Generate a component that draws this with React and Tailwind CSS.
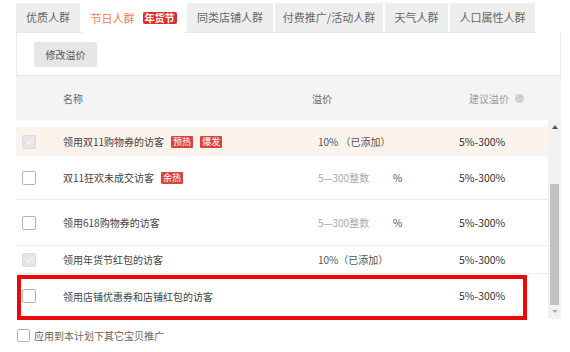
import React from "react";

const tabs = [
  { label: "优质人群", w: "w-[64px]" },
  { label: "节日人群", w: "w-[103px]", active: true },
  { label: "同类店铺人群", w: "w-[86px]" },
  { label: "付费推广/活动人群", w: "w-[108px]" },
  { label: "天气人群", w: "w-[63px]" },
  { label: "人口属性人群", w: "w-[85px]" },
];

function Tag({ children }) {
  return (
    <span className="ml-[7px] inline-flex h-[12px] items-center rounded-[1px] bg-[#d9453d] px-[2px] text-[9px] leading-none text-white">
      {children}
    </span>
  );
}

function Check({ checked, size = "w-[14px] h-[14px]" }) {
  if (checked) {
    return (
      <span className={`${size} flex items-center justify-center rounded-[2px] border border-[#dcdcdc] bg-[#e6e6e6]`}>
        <svg width="9" height="9" viewBox="0 0 10 10">
          <path d="M1.5 5.2 L4 7.5 L8.5 2.5" fill="none" stroke="#f7f7f7" strokeWidth="1.6" />
        </svg>
      </span>
    );
  }
  return <span className={`${size} block rounded-[2px] border border-[#b5b5b5] bg-white`} />;
}

function Row({ h, bg = "", border = true, checked, name, tags = [], premium, suggest = "5%-300%" }) {
  return (
    <div className={`flex items-center ${h} ${bg} ${border ? "border-b border-[#ececec]" : ""}`}>
      <div className="w-[47px] pl-[6px]">
        <Check checked={checked} />
      </div>
      <div className="flex w-[255px] items-center text-[10px] text-[#444]">
        {name}
        {tags.map((t) => (
          <Tag key={t}>{t}</Tag>
        ))}
      </div>
      <div className="flex w-[141px] items-center text-[10px]">{premium}</div>
      <div className="text-[10.5px] text-[#333]">{suggest}</div>
    </div>
  );
}

const InputCell = () => (
  <>
    <span className="w-[75px] text-[#aaa]">5—300整数</span>
    <span className="text-[#555]">%</span>
  </>
);

export default function App() {
  return (
    <div className="relative h-[352px] w-[570px] overflow-hidden bg-white font-['Noto_Sans_CJK_SC',sans-serif]">
      {/* tabs */}
      <div className="ml-[16px] flex h-[33px] w-[520px] items-end gap-[2px] border-b border-[#e8e8e8] pt-[3px]">
        {tabs.map((t) =>
          t.active ? (
            <div
              key={t.label}
              className={`${t.w} -mb-[1px] flex h-[30px] items-center justify-center gap-[8px] bg-white text-[11px] text-[#ee7b4a]`}
            >
              {t.label}
              <span className="rounded-[2px] bg-[#d8302a] px-[2px] text-[10px] font-bold leading-[12px] text-white">年货节</span>
            </div>
          ) : (
            <div
              key={t.label}
              className={`${t.w} flex h-[29px] items-center justify-center bg-[#eeeeee] text-[11px] text-[#666]`}
            >
              {t.label}
            </div>
          )
        )}
      </div>

      {/* toolbar */}
      <div className="ml-[16px] flex h-[42px] w-[545px] items-center border-x border-[#ececec] bg-white pl-[17px]">
        <button className="h-[25px] w-[63px] rounded-[2px] bg-[#e6e6e6] text-[10px] text-[#555]">修改溢价</button>
      </div>

      {/* header */}
      <div className="ml-[16px] flex h-[45px] w-[545px] items-center border-t border-[#e6e6e6] bg-[#f4f4f4] text-[10px] text-[#666]">
        <span className="w-[296px] pl-[47px]">名称</span>
        <span className="w-[157px]">溢价</span>
        <span className="flex items-center gap-[6px] text-[#999]">
          建议溢价
          <span className="h-[9px] w-[9px] rounded-full bg-[#cfcfcf]" />
        </span>
      </div>

      {/* body */}
      <div className="ml-[16px] flex h-[199px] w-[545px]">
        <div className="w-[532px] pt-[7px]">
          <Row
            h="h-[29px]"
            bg="bg-[#fcf3ec]"
            border={false}
            checked
            name="领用双11购物券的访客"
            tags={["预热", "爆发"]}
            premium={<span className="text-[#555]">10% （已添加）</span>}
          />
          <Row h="h-[44px]" name="双11狂欢未成交访客" tags={["余热"]} premium={<InputCell />} />
          <Row h="h-[46px]" name="领用618购物券的访客" premium={<InputCell />} />
          <Row h="h-[28px]" checked name="领用年货节红包的访客" premium={<span className="text-[#555]">10%（已添加）</span>} />
          <Row h="h-[44px]" border={false} name="领用店铺优惠券和店铺红包的访客" premium={null} />
        </div>
        <div className="flex w-[13px] flex-col items-center bg-[#f1f1f1]">
          <span className="mt-[5px] h-0 w-0 border-x-[3px] border-b-[4px] border-x-transparent border-b-[#555]" />
          <span className="mt-[55px] h-[121px] w-[9px] bg-[#c1c1c1]" />
          <span className="mt-[5px] h-0 w-0 border-x-[3px] border-t-[3px] border-x-transparent border-t-[#aaa]" />
        </div>
      </div>

      {/* apply to others */}
      <div className="mt-[9px] flex items-center gap-[4px] pl-[17px] text-[10px] text-[#666]">
        <Check size="w-[13px] h-[13px]" />
        应用到本计划下其它宝贝推广
      </div>

      {/* red highlight annotation */}
      <div className="absolute left-[17px] top-[275px] h-[45px] w-[510px] border-[4px] border-[#ea0a0a]" />
    </div>
  );
}
